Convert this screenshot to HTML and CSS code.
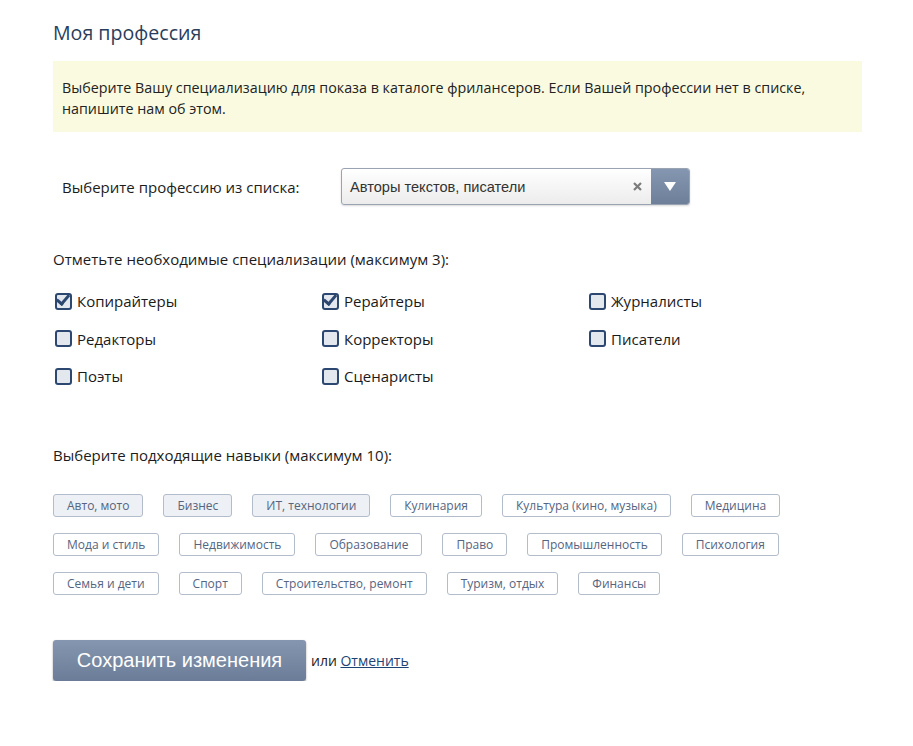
FILE: index.html
```html
<!DOCTYPE html>
<html lang="ru">
<head>
    <meta charset="UTF-8">
    <title>Моя профессия</title>
    <link rel="stylesheet" href="styles.css">
</head>
<body>
    <div class="page">
        <h1 class="title">Моя профессия</h1>

        <div class="notice">
            Выберите Вашу специализацию для показа в каталоге фрилансеров. Если Вашей профессии нет в списке,
            напишите нам об этом.
        </div>

        <div class="prof-row">
            <span class="prof-label">Выберите профессию из списка:</span>
            <div class="select">
                <span class="select-value">Авторы текстов, писатели</span>
                <span class="select-clear">
                    <svg width="9" height="9" viewBox="0 0 9 9"><path d="M1 1 L8 8 M8 1 L1 8" stroke="#7c7c7c" stroke-width="2.2"/></svg>
                </span>
                <span class="select-arrow">
                    <svg width="12" height="9" viewBox="0 0 12 9"><path d="M0 0 H12 L6 9 Z" fill="#fff"/></svg>
                </span>
            </div>
        </div>

        <p class="section-title">Отметьте необходимые специализации (максимум 3):</p>
        <div class="checks">
            <label class="check is-checked"><span class="box"></span>Копирайтеры</label>
            <label class="check is-checked"><span class="box"></span>Рерайтеры</label>
            <label class="check"><span class="box"></span>Журналисты</label>
            <label class="check"><span class="box"></span>Редакторы</label>
            <label class="check"><span class="box"></span>Корректоры</label>
            <label class="check"><span class="box"></span>Писатели</label>
            <label class="check"><span class="box"></span>Поэты</label>
            <label class="check"><span class="box"></span>Сценаристы</label>
        </div>

        <p class="section-title skills-title">Выберите подходящие навыки (максимум 10):</p>
        <div class="tags">
            <div class="tag-row">
                <span class="tag active">Авто, мото</span>
                <span class="tag active">Бизнес</span>
                <span class="tag active">ИТ, технологии</span>
                <span class="tag">Кулинария</span>
                <span class="tag">Культура (кино, музыка)</span>
                <span class="tag">Медицина</span>
            </div>
            <div class="tag-row">
                <span class="tag">Мода и стиль</span>
                <span class="tag">Недвижимость</span>
                <span class="tag">Образование</span>
                <span class="tag">Право</span>
                <span class="tag">Промышленность</span>
                <span class="tag">Психология</span>
            </div>
            <div class="tag-row">
                <span class="tag">Семья и дети</span>
                <span class="tag">Спорт</span>
                <span class="tag">Строительство, ремонт</span>
                <span class="tag">Туризм, отдых</span>
                <span class="tag">Финансы</span>
            </div>
        </div>

        <div class="actions">
            <button class="save-btn">Сохранить изменения</button>
            <span class="or">или <a href="#">Отменить</a></span>
        </div>
    </div>
</body>
</html>
```

FILE: styles.css
```css
body {
    margin: 0;
    background-color: #fff;
    font-family: "Open Sans", "Noto Sans", sans-serif;
    color: #1c1c1c;
}

.page {
    padding: 18px 51px 0 53px;
}

.title {
    margin: 0;
    font-size: 19.6px;
    font-weight: normal;
    color: #2a3e5c;
    line-height: 30px;
}

.notice {
    margin-top: 13px;
    padding: 16px 40px 13px 9px;
    background-color: #fafae1;
    font-size: 14.3px;
    line-height: 21px;
    color: #222;
}

.prof-row {
    display: flex;
    align-items: center;
    margin-top: 36px;
    padding-left: 9px;
}

.prof-label {
    width: 279px;
    font-size: 15px;
}

.select {
    display: flex;
    align-items: center;
    box-sizing: border-box;
    width: 349px;
    height: 37px;
    border: 1px solid #9aa3b1;
    border-radius: 3px;
    background: linear-gradient(#ffffff, #ececec);
    box-shadow: 0 1px 2px rgba(0,0,0,0.15);
    overflow: hidden;
}

.select-value {
    flex: 1;
    padding-left: 8px;
    font-family: "Liberation Sans", Arial, sans-serif;
    font-size: 14.6px;
    color: #333;
}

.select-clear {
    display: flex;
    margin-right: 9px;
}

.select-arrow {
    display: flex;
    align-items: center;
    justify-content: center;
    width: 38px;
    height: 100%;
    background: linear-gradient(#8596b0, #6e7f9a);
}

.section-title {
    margin: 0;
    font-size: 15px;
    line-height: 20px;
}

.prof-row + .section-title {
    margin-top: 44px;
}

.checks {
    display: grid;
    grid-template-columns: 267px 267px 267px;
    row-gap: 17.5px;
    margin-top: 22px;
}

.check {
    display: flex;
    align-items: center;
    height: 20px;
    font-size: 15px;
    color: #1a1a1a;
}

.box {
    position: relative;
    width: 13px;
    height: 13px;
    margin: 0 5px 0 2px;
    border: 2px solid #2c4770;
    border-radius: 3px;
    background-color: #e3e8ef;
}

.is-checked .box::after {
    content: "";
    position: absolute;
    left: 2px;
    top: -3px;
    width: 5px;
    height: 10px;
    border: solid #2c4770;
    border-width: 0 3px 3px 0;
    transform: rotate(40deg);
}

.skills-title {
    margin-top: 59px;
}

.tags {
    margin-top: 29px;
}

.tag-row {
    display: flex;
    gap: 20px;
    margin-bottom: 16px;
}

.tag {
    display: inline-block;
    height: 21px;
    padding: 0 13px;
    border: 1px solid #b3bccb;
    border-radius: 3px;
    font-size: 12px;
    line-height: 21px;
    color: #55657f;
}

.tag.active {
    background-color: #edf0f4;
}

.actions {
    display: flex;
    align-items: center;
    margin-top: 45px;
}

.save-btn {
    width: 253px;
    height: 41px;
    border: none;
    border-radius: 3px;
    background: linear-gradient(#8597b0, #6a7c97);
    box-shadow: 0 1px 2px rgba(0,0,0,0.4);
    color: #fff;
    font-family: "Liberation Sans", Arial, sans-serif;
    font-size: 20px;
    cursor: pointer;
}

.or {
    margin-left: 5px;
    font-size: 14px;
}

.or a {
    color: #1d4375;
}
```
